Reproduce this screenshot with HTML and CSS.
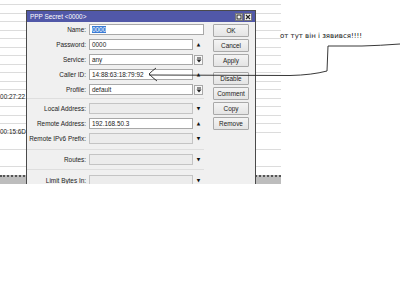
FILE: index.html
```html
<!DOCTYPE html>
<html lang="uk">
<head>
    <meta charset="UTF-8">
    <meta name="viewport" content="width=device-width, initial-scale=1.0">
    <title>PPP Secret</title>
    <link rel="stylesheet" href="styles.css">
</head>
<body>
    <div class="screen">
        <!-- вікно зі списком позаду -->
        <div class="list">
            <div class="list-rows">
                <div class="cell cell-first">00:27:22</div>
                <div class="cell cell-second">00:15:6D</div>
            </div>
            <div class="list-bottom"></div>
        </div>

        <!-- діалог PPP Secret -->
        <div class="dialog">
            <div class="titlebar">
                <span>PPP Secret &lt;0000&gt;</span>
                <span class="title-icons">
                    <svg width="8" height="8" viewBox="0 0 8 8"><rect x="0.5" y="0.5" width="7" height="7" fill="#f4f4f4" stroke="#777"/><rect x="2" y="2" width="4" height="4" fill="none" stroke="#222"/></svg>
                    <svg width="8" height="8" viewBox="0 0 8 8"><rect x="0.5" y="0.5" width="7" height="7" fill="#f4f4f4" stroke="#777"/><path d="M2 2L6 6M6 2L2 6" stroke="#222" stroke-width="1.2"/></svg>
                </span>
            </div>
            <div class="body">
                <div class="form">
                    <div class="group">
                        <div class="row"><label>Name:</label><div class="field wide"><span class="sel">0000</span></div></div>
                        <div class="row"><label>Password:</label><div class="field">0000</div><span class="arrow">▲</span></div>
                        <div class="row"><label>Service:</label><div class="field">any</div><span class="drop"><svg width="6" height="6" viewBox="0 0 6 6"><path d="M1 1H5" stroke="#222"/><path d="M0.5 2.5H5.5L3 5.5Z" fill="#222"/></svg></span></div>
                        <div class="row"><label>Caller ID:</label><div class="field">14:88:63:18:79:92</div><span class="arrow">▲</span></div>
                        <div class="row"><label>Profile:</label><div class="field">default</div><span class="drop"><svg width="6" height="6" viewBox="0 0 6 6"><path d="M1 1H5" stroke="#222"/><path d="M0.5 2.5H5.5L3 5.5Z" fill="#222"/></svg></span></div>
                    </div>
                    <div class="group group-mid">
                        <div class="row"><label>Local Address:</label><div class="field off"></div><span class="arrow">▼</span></div>
                        <div class="row"><label>Remote Address:</label><div class="field">192.168.50.3</div><span class="arrow">▲</span></div>
                        <div class="row"><label>Remote IPv6 Prefix:</label><div class="field off"></div><span class="arrow">▼</span></div>
                    </div>
                    <div class="group group-routes">
                        <div class="row"><label>Routes:</label><div class="field off"></div><span class="arrow">▼</span></div>
                    </div>
                    <div class="row"><label>Limit Bytes In:</label><div class="field off"></div><span class="arrow">▼</span></div>
                </div>
                <div class="buttons">
                    <button>OK</button>
                    <button>Cancel</button>
                    <button>Apply</button>
                    <button class="gap-big">Disable</button>
                    <button>Comment</button>
                    <button class="gap-small">Copy</button>
                    <button>Remove</button>
                </div>
            </div>
        </div>

        <div class="note">от тут він і зявився!!!!</div>

        <!-- стрілка, намальована від руки -->
        <svg class="scribble" width="400" height="300" viewBox="0 0 400 300">
            <path d="M156 68 Q152 71 149 74 Q153 78 157 81" fill="none" stroke="#222" stroke-width="0.9"/>
            <path d="M149 75 L290 75.5 Q312 75 327 71 L328 46 L362 46 Q380 45.5 400 44" fill="none" stroke="#222" stroke-width="0.9"/>
        </svg>
    </div>
</body>
</html>
```

FILE: styles.css
```css
body {
    margin: 0;
    background: #fff;
    font-family: "Liberation Sans", Arial, sans-serif;
    font-size: 6.4px;
    color: #222;
}

.screen {
    position: relative;
    width: 400px;
    height: 184px;
    overflow: hidden;
}

.list {
    width: 281px;
    height: 184px;
    display: flex;
    flex-direction: column;
}

.list-rows {
    flex: 1;
    background: repeating-linear-gradient(to bottom, #fff 0, #fff 4.5px, #dcdcdc 4.5px, #dcdcdc 5.3px, #fff 5.3px, #fff 8.5px);
}

.cell {
    width: 25px;
    text-align: right;
    white-space: nowrap;
}

.cell-first {
    margin-top: 93px;
}

.cell-second {
    margin-top: 28px;
}

.list-bottom {
    height: 7px;
    border-top: 2px dotted #555;
    background: #bdbdbd;
    margin-top: 3px;
}

.dialog {
    position: absolute;
    left: 26px;
    top: 10px;
    width: 228px;
    height: 200px;
    border: 1px solid #4a4a4a;
    background: #f0f0f0;
}

.titlebar {
    height: 11px;
    background: #5158a8;
    color: #fff;
    display: flex;
    align-items: center;
    justify-content: space-between;
    padding: 0 3px 0 3px;
}

.title-icons {
    display: flex;
    gap: 1px;
}

.title-icons svg {
    display: block;
}

.body {
    display: flex;
    padding-top: 2px;
}

.form {
    width: 177px;
}

.group {
    border-bottom: 1px solid #dedede;
    padding-bottom: 3px;
    margin-bottom: 4px;
}

.group-mid {
    padding-bottom: 5px;
    margin-bottom: 4px;
}

.group-routes {
    padding-bottom: 4px;
    margin-bottom: 5px;
}

.row {
    display: flex;
    align-items: center;
    height: 11px;
    margin-bottom: 4px;
}

.group .row:last-child {
    margin-bottom: 0;
}

.row label {
    width: 59px;
    text-align: right;
    white-space: nowrap;
    margin-right: 3px;
}

.field {
    box-sizing: border-box;
    width: 104px;
    height: 11px;
    border: 1px solid #a8a8a8;
    background: #fff;
    padding: 0 2px;
    line-height: 9px;
    white-space: nowrap;
    overflow: hidden;
}

.field.wide {
    width: 115px;
}

.field.off {
    background: #ececec;
    border-color: #c4c4c4;
}

.sel {
    background: #3a7bd5;
    color: #fff;
}

.arrow {
    width: 11px;
    text-align: center;
    font-family: "DejaVu Sans", sans-serif;
    font-size: 4.5px;
    color: #111;
}

.drop {
    box-sizing: border-box;
    width: 9px;
    height: 10px;
    margin-left: 1px;
    border: 1px solid #a8a8a8;
    background: #f8f8f8;
    display: flex;
    align-items: center;
    justify-content: center;
}

.buttons {
    display: flex;
    flex-direction: column;
    margin-left: 9px;
}

.buttons button {
    width: 36px;
    height: 13px;
    margin-bottom: 2px;
    padding: 0;
    border: 1px solid #a9a9a9;
    border-radius: 1px;
    background: linear-gradient(#f4f4f4, #e4e4e4);
    font-family: "Liberation Sans", Arial, sans-serif;
    font-size: 6.4px;
    color: #222;
}

.buttons .gap-big {
    margin-top: 3px;
}

.buttons .gap-small {
    margin-top: 0;
}

.note {
    position: absolute;
    left: 280px;
    top: 32px;
    font-family: "DejaVu Sans", sans-serif;
    font-size: 7px;
    color: #111;
    white-space: nowrap;
}

.scribble {
    position: absolute;
    left: 0;
    top: 0;
    pointer-events: none;
}
```
